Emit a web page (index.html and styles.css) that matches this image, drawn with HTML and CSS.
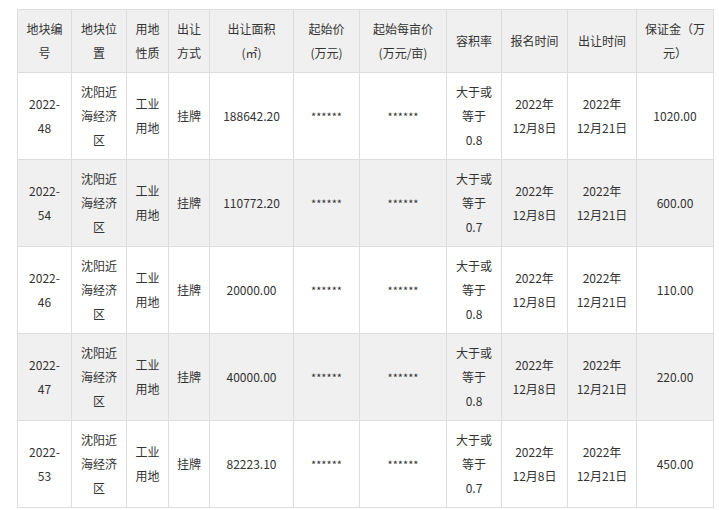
FILE: index.html
```html
<!DOCTYPE html>
<html lang="zh-CN">
<head>
<meta charset="utf-8">
<title>地块出让</title>
<link rel="stylesheet" href="styles.css">
</head>
<body>
<div class="wrap">
<table class="land">
<colgroup>
<col class="c1"><col class="c2"><col class="c3"><col class="c4"><col class="c5"><col class="c6"><col class="c7"><col class="c8"><col class="c9"><col class="c10"><col class="c11">
</colgroup>
<thead>
<tr>
<th>地块编号</th><th>地块位置</th><th>用地性质</th><th>出让方式</th><th>出让面积<br>(㎡)</th><th>起始价<br>(万元)</th><th>起始每亩价<br>(万元/亩)</th><th>容积率</th><th>报名时间</th><th>出让时间</th><th>保证金（万<br>元）</th>
</tr>
</thead>
<tbody>
<tr>
<td>2022-48</td><td>沈阳近海经济区</td><td>工业用地</td><td>挂牌</td><td>188642.20</td><td class="stars">******</td><td class="stars">******</td><td>大于或等于0.8</td><td>2022年<br>12月8日</td><td>2022年<br>12月21日</td><td>1020.00</td>
</tr>
<tr>
<td>2022-54</td><td>沈阳近海经济区</td><td>工业用地</td><td>挂牌</td><td>110772.20</td><td class="stars">******</td><td class="stars">******</td><td>大于或等于0.7</td><td>2022年<br>12月8日</td><td>2022年<br>12月21日</td><td>600.00</td>
</tr>
<tr>
<td>2022-46</td><td>沈阳近海经济区</td><td>工业用地</td><td>挂牌</td><td>20000.00</td><td class="stars">******</td><td class="stars">******</td><td>大于或等于0.8</td><td>2022年<br>12月8日</td><td>2022年<br>12月21日</td><td>110.00</td>
</tr>
<tr>
<td>2022-47</td><td>沈阳近海经济区</td><td>工业用地</td><td>挂牌</td><td>40000.00</td><td class="stars">******</td><td class="stars">******</td><td>大于或等于0.8</td><td>2022年<br>12月8日</td><td>2022年<br>12月21日</td><td>220.00</td>
</tr>
<tr>
<td>2022-53</td><td>沈阳近海经济区</td><td>工业用地</td><td>挂牌</td><td>82223.10</td><td class="stars">******</td><td class="stars">******</td><td>大于或等于0.7</td><td>2022年<br>12月8日</td><td>2022年<br>12月21日</td><td>450.00</td>
</tr>
</tbody>
</table>
</div>
</body>
</html>
```
FILE: styles.css
```css
html, body {
  margin: 0;
  padding: 0;
  background: #ffffff;
}
.wrap {
  padding: 9px 0 0 17px;
}
.land {
  border-collapse: collapse;
  table-layout: fixed;
  width: 696px;
  font-family: "Noto Sans CJK SC", "Noto Sans", sans-serif;
  font-size: 12px;
  line-height: 24px;
  color: #333333;
}
.land th, .land td {
  border: 1px solid #dddddd;
  padding: 7px 7px;
  text-align: center;
  vertical-align: middle;
  font-weight: normal;
}
.land thead th {
  background: #f0f0f0;
}
.land tbody tr:nth-child(even) td {
  background: #f0f0f0;
}
.land td.stars {
  font-size: 11px;
  letter-spacing: 0;
}
.c1 { width: 54px; }
.c2 { width: 55px; }
.c3 { width: 42px; }
.c4 { width: 41px; }
.c5 { width: 84px; }
.c6 { width: 66px; }
.c7 { width: 87px; }
.c8 { width: 55px; }
.c9 { width: 66px; }
.c10 { width: 69px; }
.c11 { width: 77px; }
```
